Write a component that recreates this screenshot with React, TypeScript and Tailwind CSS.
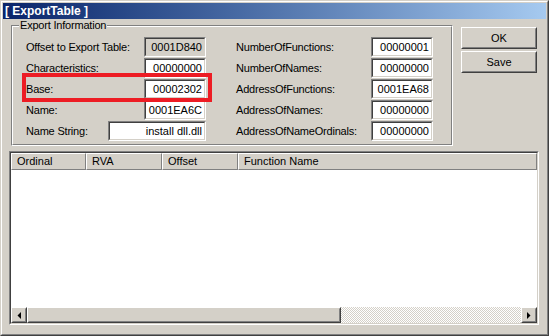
import React from "react";

const Field = ({
  label,
  value,
  grey,
  wide,
}: {
  label: string;
  value: string;
  grey?: boolean;
  wide?: boolean;
}) => (
  <div className="flex h-[20px] items-center justify-between">
    <span className="text-[11px] leading-none tracking-[-0.2px]">{label}</span>
    <div
      className={`h-[20px] ${wide ? "w-[98px]" : "w-[62px]"} border border-t-[#808080] border-l-[#808080] border-r-white border-b-white`}
    >
      <div
        className={`h-full border border-t-[#404040] border-l-[#404040] border-r-[#d4d0c8] border-b-[#d4d0c8] ${grey ? "bg-[#d4d0c8]" : "bg-white"} flex items-center justify-end pr-[2px] text-[11px] leading-none`}
      >
        {value}
      </div>
    </div>
  </div>
);

const Raised = ({
  className,
  children,
}: {
  className?: string;
  children?: React.ReactNode;
}) => (
  <div
    className={`border border-t-white border-l-white border-r-[#404040] border-b-[#404040] ${className ?? ""}`}
  >
    <div className="h-full w-full border border-t-[#d4d0c8] border-l-[#d4d0c8] border-r-[#808080] border-b-[#808080] flex items-center justify-center bg-[#d4d0c8]">
      {children}
    </div>
  </div>
);

const HeaderCell = ({ title, className }: { title: string; className: string }) => (
  <div
    className={`h-[17px] border border-t-white border-l-white border-r-[#808080] border-b-[#808080] flex items-center pl-[5px] text-[11px] leading-none ${className}`}
  >
    {title}
  </div>
);

export default function App() {
  return (
    <div className="relative w-[549px] h-[336px] bg-[#d4d0c8] border border-t-[#d4d0c8] border-l-[#d4d0c8] border-r-[#404040] border-b-[#404040] font-['Liberation_Sans',Arial,sans-serif] text-black">
      <div className="h-full border border-t-white border-l-white border-r-[#808080] border-b-[#808080] p-px flex flex-col">
        {/* Title bar */}
        <div className="h-[16px] bg-linear-to-r from-[#0a246a] to-[#a6caf0] flex items-center pl-[2px]">
          <span className="text-white font-bold text-[12px] leading-none">[ ExportTable ]</span>
        </div>

        {/* Body */}
        <div className="flex-1 flex flex-col">
          <div className="flex">
            {/* Group box */}
            <div className="relative ml-[8px] mt-[6px] w-[442px] h-[121px] border border-t-[#808080] border-l-[#808080] border-r-white border-b-white">
              <span className="absolute left-[7px] top-[-7px] px-[1px] bg-[#d4d0c8] text-[11px] leading-[13px] tracking-[-0.2px]">
                Export Information
              </span>
              <div className="h-full border border-t-white border-l-white border-r-[#808080] border-b-[#808080] pt-[10px] pl-[13px] flex gap-[30px]">
                <div className="w-[180px] flex flex-col gap-[1px]">
                  <Field label="Offset to Export Table:" value="0001D840" grey />
                  <Field label="Characteristics:" value="00000000" />
                  <Field label="Base:" value="00002302" />
                  <Field label="Name:" value="0001EA6C" />
                  <Field label="Name String:" value="install dll.dll" wide />
                </div>
                <div className="w-[197px] flex flex-col gap-[1px]">
                  <Field label="NumberOfFunctions:" value="00000001" />
                  <Field label="NumberOfNames:" value="00000000" />
                  <Field label="AddressOfFunctions:" value="0001EA68" />
                  <Field label="AddressOfNames:" value="00000000" />
                  <Field label="AddressOfNameOrdinals:" value="00000000" />
                </div>
              </div>
            </div>

            {/* Buttons */}
            <div className="ml-[8px] mt-[8px] flex flex-col gap-[2px]">
              <Raised className="w-[76px] h-[22px]">
                <span className="text-[11px] leading-none">OK</span>
              </Raised>
              <Raised className="w-[76px] h-[22px]">
                <span className="text-[11px] leading-none">Save</span>
              </Raised>
            </div>
          </div>

          {/* List view */}
          <div className="ml-[6px] mt-[5px] w-[530px] h-[174px] border border-t-[#808080] border-l-[#808080] border-r-white border-b-white">
            <div className="h-full border border-t-[#404040] border-l-[#404040] border-r-[#d4d0c8] border-b-[#d4d0c8] bg-white flex flex-col">
              <div className="flex bg-[#d4d0c8]">
                <HeaderCell title="Ordinal" className="w-[75px]" />
                <HeaderCell title="RVA" className="w-[76px]" />
                <HeaderCell title="Offset" className="w-[76px]" />
                <HeaderCell title="Function Name" className="flex-1" />
              </div>
              <div className="flex-1" />
              {/* Horizontal scrollbar */}
              <div className="h-[16px] flex">
                <Raised className="w-[16px] h-[16px]">
                  <svg width="4" height="7" viewBox="0 0 4 7">
                    <path d="M4 0 L4 7 L0.5 3.5 Z" fill="#000" />
                  </svg>
                </Raised>
                <Raised className="w-[314px] h-[16px]" />
                <div className="flex-1 bg-[repeating-conic-gradient(#ffffff_0%_25%,#d4d0c8_0%_50%)] bg-[length:2px_2px]" />
                <Raised className="w-[16px] h-[16px]">
                  <svg width="4" height="7" viewBox="0 0 4 7">
                    <path d="M0 0 L0 7 L3.5 3.5 Z" fill="#000" />
                  </svg>
                </Raised>
              </div>
            </div>
          </div>
        </div>
      </div>

      {/* Red highlight annotation */}
      <div className="absolute left-[21px] top-[72px] w-[190px] h-[29px] border-[4px] border-[#ed1c24] pointer-events-none" />
    </div>
  );
}
